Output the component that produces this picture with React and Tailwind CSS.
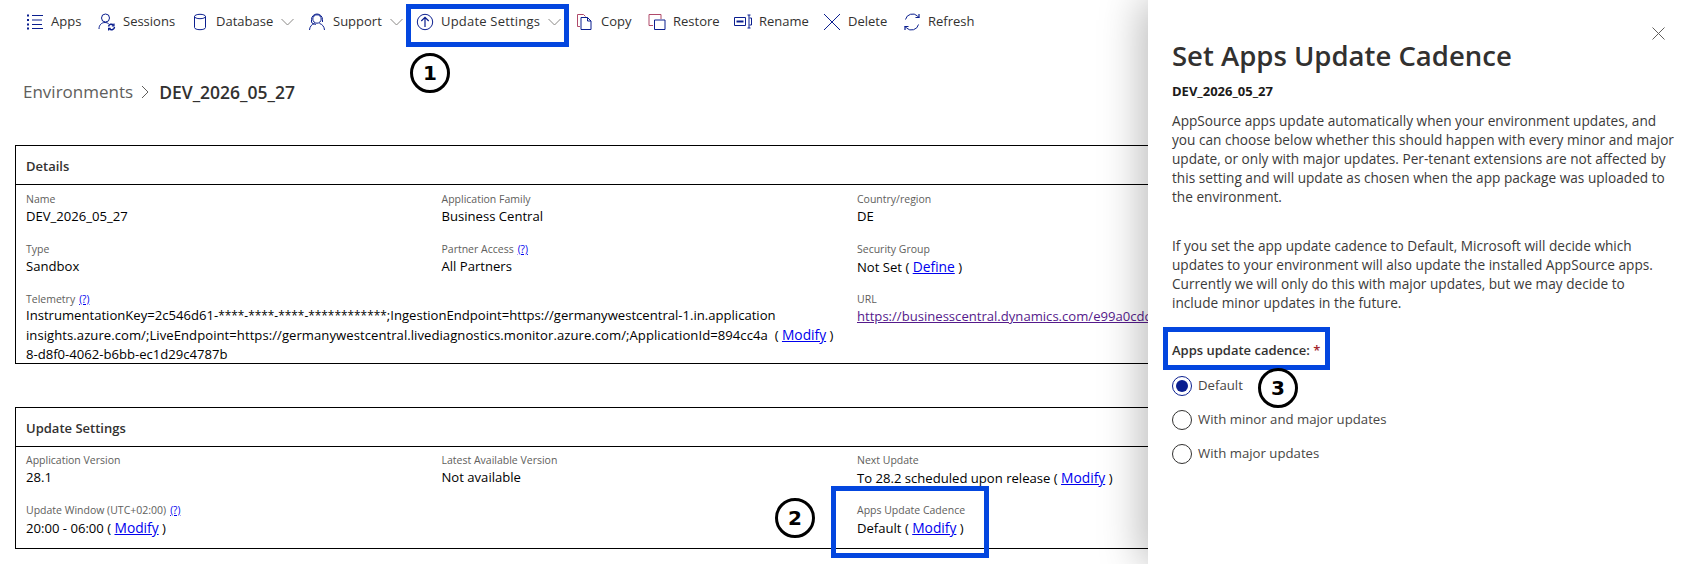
import React from 'react';

const BLUE = '#0b1f8f';

function Icon({ children }) {
  return (
    <svg width="18" height="18" viewBox="0 0 18 18" fill="none" stroke={BLUE} strokeWidth="1" className="shrink-0 -ml-px">
      {children}
    </svg>
  );
}

const AppsIcon = () => (
  <Icon>
    <path d="M1 1.500h2v2H1zM1 6h2v2H1zM1 10.500h2v2H1zM1 14.500h2v2H1z" fill={BLUE} stroke="none" />
    <path d="M6 2.500h11M6 7h10M6 11.500h10M6 15.500h11" />
  </Icon>
);
const SessionsIcon = () => (
  <Icon>
    <circle cx="7.500" cy="5" r="4" />
    <path d="M1 16c0-4 2.500-6.500 6-6.500 1.500 0 2.700.4 3.600 1.100" />
    <path d="M10.500 13.500a3 3 0 0 1 5-1.500M16.500 14a3 3 0 0 1-5 2" strokeWidth="1.500" />
    <path d="M16 10.500V12.800h-2.200M10.600 17.400v-2h2.100" strokeWidth="1.200" />
  </Icon>
);
const DatabaseIcon = () => (
  <Icon>
    <ellipse cx="9" cy="3.500" rx="5.500" ry="2.200" />
    <path d="M3.500 3.500v11c0 1.300 2.500 2.200 5.500 2.200s5.500-.9 5.500-2.200v-11" />
  </Icon>
);
const SupportIcon = () => (
  <Icon>
    <circle cx="9" cy="6" r="4.200" />
    <path d="M3.500 9V6.500a5.500 5.500 0 0 1 11 0V9" />
    <path d="M1.500 17c.2-3.500 2.500-6 5-6.500M16.500 17c-.2-3.500-2.500-6-5-6.500" />
    <path d="M3.500 9c.5 1.500 2 2.300 4.500 2.300" />
  </Icon>
);
const UpdateIcon = () => (
  <Icon>
    <circle cx="9" cy="9" r="7.700" />
    <path d="M9 14V4.500M5.300 8 9 4.300 12.700 8" strokeWidth="1.200" />
  </Icon>
);
const CopyIcon = () => (
  <Icon>
    <path d="M4 13.500H1.500V1.500h6l2 2" stroke="#b04a6a" />
    <path d="M5 4.500h6.500l3.500 3.500v8.500H5z" />
    <path d="M11.500 4.500V8H15" />
  </Icon>
);
const RestoreIcon = () => (
  <Icon>
    <path d="M5 12.500H1V1.500h12V6" stroke="#b04a6a" />
    <path d="M6.500 7h10.500v9.500H6.500z" />
  </Icon>
);
const RenameIcon = () => (
  <Icon>
    <path d="M.5 4.500h11v8H.5z" />
    <path d="M2.500 8.500h7" strokeWidth="2" />
    <path d="M13.500 2h3M13.500 15h3M15 2v13M15.500 5H17.500v7H15.500" />
  </Icon>
);
const DeleteIcon = () => (
  <Icon>
    <path d="M1 1l16 16M17 1 1 17" />
  </Icon>
);
const RefreshIcon = () => (
  <Icon>
    <path d="M2.500 6.500a7.200 7.200 0 0 1 12-3.500l1.500 1.500" />
    <path d="M15.500 11.500a7.200 7.200 0 0 1-12 3.500L2 13.500" />
    <path d="M16 1v3.500h-3.500M2 17v-3.500h3.500" strokeWidth="1.200" />
  </Icon>
);

function Chevron() {
  return (
    <svg width="13" height="8" viewBox="0 0 13 8" fill="none" stroke="#8a8886" strokeWidth="1" className="ml-auto shrink-0">
      <path d="M.5 1l6 6 6-6" />
    </svg>
  );
}

function ToolItem({ icon, label, menu, width, textClass = '' }) {
  return (
    <div className={`flex items-center gap-2 ${width} ${menu ? 'pr-[17px]' : ''}`}>
      {icon}
      <span className={`whitespace-nowrap text-[13px] leading-[19px] text-[#323130] -ml-px ${textClass}`}>{label}</span>
      {menu && <Chevron />}
    </div>
  );
}

function Toolbar() {
  return (
    <div className="flex h-[43px] items-center pl-[27px]">
      <ToolItem icon={<AppsIcon />} label="Apps" width="w-[72px]" />
      <ToolItem icon={<SessionsIcon />} label="Sessions" width="w-[93px]" />
      <ToolItem icon={<DatabaseIcon />} label="Database" menu width="w-[117px]" />
      <ToolItem icon={<SupportIcon />} label="Support" menu width="w-[108px]" />
      <ToolItem icon={<UpdateIcon />} label="Update Settings" menu width="w-[160px]" textClass="tracking-[0.2px]" />
      <ToolItem icon={<CopyIcon />} label="Copy" width="w-[72px]" />
      <ToolItem icon={<RestoreIcon />} label="Restore" width="w-[86px]" />
      <ToolItem icon={<RenameIcon />} label="Rename" width="w-[89px]" />
      <ToolItem icon={<DeleteIcon />} label="Delete" width="w-[80px]" />
      <ToolItem icon={<RefreshIcon />} label="Refresh" width="w-[90px]" />
    </div>
  );
}

function Help() {
  return <a className="text-[10px] text-[#0000ee] underline ml-1">(?)</a>;
}

function Link({ children }) {
  return <a className="text-[13.8px] text-[#0000ee] underline">{children}</a>;
}

function Field({ label, help, children, className = '' }) {
  return (
    <div className={`h-[50px] ${className}`}>
      <div className="pt-px text-[10.5px] leading-[16px] text-[#605e5c]">
        {label}
        {help && <Help />}
      </div>
      <div className="text-[13.1px] leading-[19px] text-black whitespace-nowrap">{children}</div>
    </div>
  );
}

function Section({ title, height, bodyClass, children }) {
  return (
    <section className={`ml-[15px] w-[1300px] border border-black ${height}`}>
      <div className="flex h-[39px] items-center border-b border-black pl-[10px] pt-[3px] text-[13px] font-semibold text-[#323130]">
        {title}
      </div>
      <div className={`grid grid-cols-[415.5px_415.5px_1fr] pl-[10px] ${bodyClass}`}>{children}</div>
    </section>
  );
}

function Radio({ label, checked }) {
  return (
    <div className="flex h-[34px] items-center gap-[6px]">
      <span className={`flex size-[20px] items-center justify-center rounded-full border ${checked ? 'border-[#0b1f8f]' : 'border-[#323130]'}`}>
        {checked && <span className="size-[12px] rounded-full bg-[#0b1f8f]" />}
      </span>
      <span className="text-[13.2px] text-[#484644]">{label}</span>
    </div>
  );
}

function Panel() {
  return (
    <aside className="absolute left-[1148px] top-0 h-[564px] w-[542px] bg-white pl-[24px] pt-[37px] shadow-[-6px_0_40px_rgba(0,0,0,0.28)]">
      <svg width="13" height="13" viewBox="0 0 13 13" stroke="#605e5c" strokeWidth="1" className="absolute left-[504px] top-[27px]">
        <path d="M.5.5l12 12M12.500.5l-12 12" />
      </svg>
      <h1 className="text-[27.500px] leading-[38px] font-semibold text-[#323130]">Set Apps Update Cadence</h1>
      <div className="mt-[7px] text-[13px] leading-[19px] font-bold text-[#1b1a19]">DEV_2026_05_27</div>
      <p className="mt-[10px] text-[13.650px] leading-[19px] font-medium text-[#3b3a39]">
        AppSource apps update automatically when your environment updates, and
        <br />
        you can choose below whether this should happen with every minor and major
        <br />
        update, or only with major updates. Per-tenant extensions are not affected by
        <br />
        this setting and will update as chosen when the app package was uploaded to
        <br />
        the environment.
      </p>
      <p className="mt-[30px] text-[13.650px] leading-[19px] font-medium text-[#3b3a39]">
        If you set the app update cadence to Default, Microsoft will decide which
        <br />
        updates to your environment will also update the installed AppSource apps.
        <br />
        Currently we will only do this with major updates, but we may decide to
        <br />
        include minor updates in the future.
      </p>
      <div className="mt-[29px] text-[13px] leading-[19px] font-semibold text-[#323130]">
        Apps update cadence: <span className="text-[#a4262c]">*</span>
      </div>
      <div className="mt-[9px]">
        <Radio label="Default" checked />
        <Radio label="With minor and major updates" />
        <Radio label="With major updates" />
      </div>
    </aside>
  );
}

function Marker({ n, className }) {
  return (
    <div className={`absolute flex size-[40px] items-center justify-center rounded-full border-[3px] border-black bg-white font-['DejaVu_Sans',sans-serif] text-[20px] font-bold text-black ${className}`}>
      {n}
    </div>
  );
}

export default function App() {
  return (
    <div className="relative h-[564px] w-[1690px] overflow-hidden bg-white font-['Open_Sans',sans-serif]">
      <Toolbar />
      <div className="ml-[23px] mt-[36px] flex h-[26px] items-center">
        <span className="text-[17px] text-[#605e5c]">Environments</span>
        <svg width="9" height="14" viewBox="0 0 9 14" fill="none" stroke="#605e5c" strokeWidth="1" className="ml-[8px] mr-[9px]">
          <path d="M1 1l6 6-6 6" />
        </svg>
        <span className="text-[17.500px] font-semibold text-[#323130]">DEV_2026_05_27</span>
      </div>

      <div className="mt-[40px]">
        <Section title="Details" height="h-[219px]" bodyClass="pt-[5px]">
          <Field label="Name">DEV_2026_05_27</Field>
          <Field label="Application Family">Business Central</Field>
          <Field label="Country/region">DE</Field>
          <Field label="Type">Sandbox</Field>
          <Field label="Partner Access" help>All Partners</Field>
          <Field label="Security Group">
            Not Set ( <Link>Define</Link> )
          </Field>
          <Field label="Telemetry" help className="col-span-2">
            <div className="-mt-px">
              InstrumentationKey=2c546d61-<span className="text-[11.900px]">****-****-****-************</span>;IngestionEndpoint=https://germanywestcentral-1.in.application
              <br />
              <span className="tracking-[0.05px]">insights.azure.com/;LiveEndpoint=https://germanywestcentral.livediagnostics.monitor.azure.com/;ApplicationId=894cc4a</span>&nbsp; ( <Link>Modify</Link> )
              <br />
              8-d8f0-4062-b6bb-ec1d29c4787b
            </div>
          </Field>
          <Field label="URL">
            <a className="text-[#551a8b] underline">https://businesscentral.dynamics.com/e99a0cdc</a>
          </Field>
        </Section>

        <div className="mt-[43px]">
          <Section title="Update Settings" height="h-[142px]" bodyClass="pt-[4px]">
            <Field label="Application Version">28.1</Field>
            <Field label="Latest Available Version">Not available</Field>
            <Field label="Next Update">
              To 28.2 scheduled upon release ( <Link>Modify</Link> )
            </Field>
            <Field label="Update Window (UTC+02:00)" help>
              20:00 - 06:00 ( <Link>Modify</Link> )
            </Field>
            <div />
            <Field label="Apps Update Cadence">
              Default ( <Link>Modify</Link> )
            </Field>
          </Section>
        </div>
      </div>

      <Panel />

      <div className="absolute left-[406px] top-[4px] h-[43px] w-[163px] border-[5px] border-[#0346df]" />
      <div className="absolute left-[831px] top-[486px] h-[72px] w-[158px] border-[5px] border-[#0346df]" />
      <div className="absolute left-[1163px] top-[327px] h-[43px] w-[167px] border-[5px] border-[#0346df]" />
      <Marker n="1" className="left-[410px] top-[53px]" />
      <Marker n="2" className="left-[775px] top-[498px]" />
      <Marker n="3" className="left-[1258px] top-[368px]" />
    </div>
  );
}
